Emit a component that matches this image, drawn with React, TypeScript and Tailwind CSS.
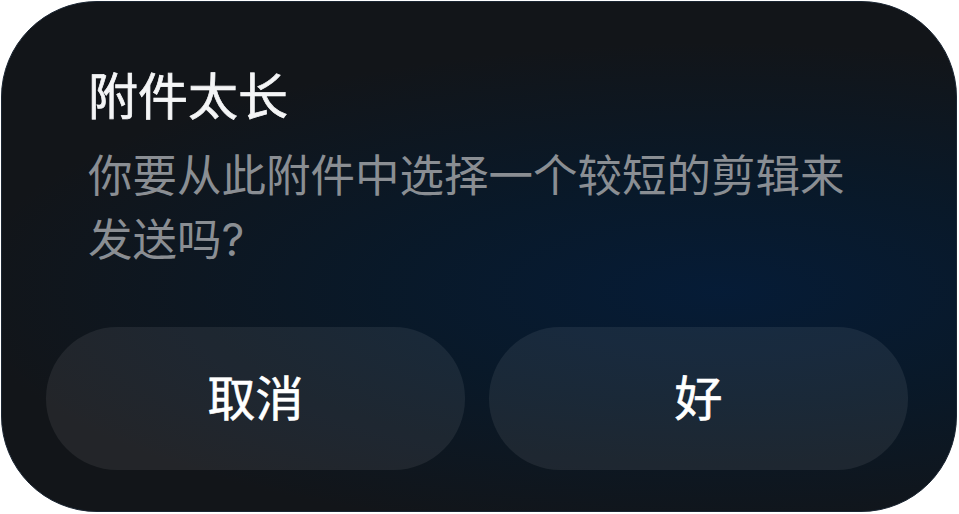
export default function App() {
  return (
    <div className="w-[959px] h-[514px] bg-white pt-[1px] pl-[1px] font-['Inter','Noto_Sans_CJK_SC',sans-serif]">
      <div className="relative w-[956px] h-[511px] overflow-hidden rounded-[96px] border border-[#1b2633] bg-[#121519] bg-[radial-gradient(ellipse_760px_250px_at_720px_290px,rgba(5,28,56,0.95)_0%,rgba(6,26,46,0.75)_45%,rgba(18,21,25,0)_100%)]">
        <div className="flex h-full flex-col pl-[86px] pr-[49px] pt-[65px]">
          {/* Title */}
          <h1 className="text-[50px] leading-[60px] font-normal text-[#f4f5f6] [-webkit-text-stroke:0.7px_#f4f5f6]">
            附件太长
          </h1>
          <p className="mt-[17px] w-[790px] text-[44.5px] leading-[64px] text-[#8a8e93]">
            你要从此附件中选择一个较短的剪辑来发送吗?
          </p>
        </div>

        {/* Actions */}
        <div className="absolute left-[44px] right-[48px] top-[325px] flex gap-[24px]">
          <button className="flex h-[143px] flex-1 items-center justify-center rounded-full bg-white/[0.07] text-[48px] font-normal text-white [-webkit-text-stroke:0.6px_#ffffff]">
            取消
          </button>
          <button className="flex h-[143px] flex-1 items-center justify-center rounded-full bg-white/[0.07] text-[48px] font-normal text-white [-webkit-text-stroke:0.6px_#ffffff]">
            好
          </button>
        </div>
      </div>
    </div>
  );
}
